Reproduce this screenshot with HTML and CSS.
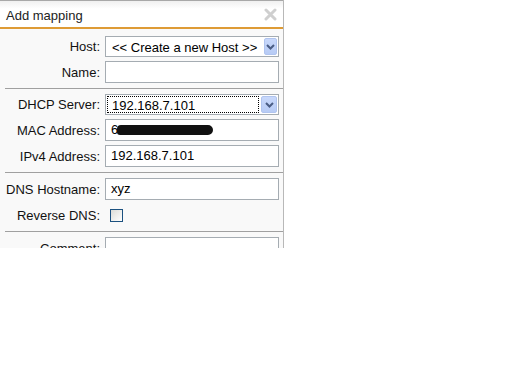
FILE: index.html
```html
<!DOCTYPE html>
<html lang="en">
<head>
    <meta charset="UTF-8">
    <meta name="viewport" content="width=device-width, initial-scale=1.0">
    <title>Add mapping</title>
    <link rel="stylesheet" href="styles.css">
</head>
<body>
    <div class="dialog">
        <div class="title-bar">
            <span class="title">Add mapping</span>
            <svg class="close" width="13" height="13" viewBox="0 0 13 13">
                <path d="M2 2 L11 11 M11 2 L2 11" stroke="#cfcfcf" stroke-width="3" stroke-linecap="round"/>
            </svg>
        </div>

        <div class="section first">
            <label class="lbl">Host:</label>
            <div class="select">
                <span class="select-text">&lt;&lt; Create a new Host &gt;&gt;</span>
                <span class="select-btn"><svg width="9" height="6" viewBox="0 0 9 6"><path d="M1 1 L4.5 4.5 L8 1" fill="none" stroke="#4a5d85" stroke-width="2"/></svg></span>
            </div>
            <label class="lbl">Name:</label>
            <div class="input"></div>
        </div>

        <div class="section">
            <label class="lbl">DHCP Server:</label>
            <div class="select">
                <span class="select-text focused">192.168.7.101</span>
                <span class="select-btn"><svg width="9" height="6" viewBox="0 0 9 6"><path d="M1 1 L4.5 4.5 L8 1" fill="none" stroke="#4a5d85" stroke-width="2"/></svg></span>
            </div>
            <label class="lbl">MAC Address:</label>
            <div class="input">6<span class="redact"></span></div>
            <label class="lbl">IPv4 Address:</label>
            <div class="input">192.168.7.101</div>
        </div>

        <div class="section">
            <label class="lbl">DNS Hostname:</label>
            <div class="input">xyz</div>
            <label class="lbl">Reverse DNS:</label>
            <div class="check-cell"><span class="checkbox"></span></div>
        </div>

        <div class="section last">
            <label class="lbl">Comment:</label>
            <div class="input"></div>
        </div>
    </div>
</body>
</html>
```

FILE: styles.css
```css
* {
    box-sizing: border-box;
}

body {
    margin: 0;
    padding: 0;
    background: #ffffff;
    font-family: "Liberation Sans", Arial, sans-serif;
    font-size: 13px;
    color: #000;
}

.dialog {
    width: 284px;
    height: 248px;
    overflow: hidden;
    background: #f9f9f9;
    border-right: 1px solid #b8b8b8;
}

.title-bar {
    display: flex;
    align-items: center;
    justify-content: space-between;
    height: 29px;
    padding: 0 6px;
    border-top: 1px solid #a8a8a8;
    border-bottom: 2px solid #de9b35;
    background: linear-gradient(to bottom, #f0f0f0, #ffffff 30%, #ffffff);
}

.title {
    font-size: 13px;
    color: #222;
    padding-top: 2px;
}

.close {
    margin-top: 1px;
}

.section {
    display: grid;
    grid-template-columns: 95px 174px;
    column-gap: 5px;
    row-gap: 4px;
    align-items: center;
    padding: 5px 0;
    margin-left: 5px;
    border-bottom: 1px solid #a0a0a0;
}

.section.first {
    padding-top: 7px;
}

.section .lbl {
    text-align: right;
    margin-left: -5px;
    white-space: nowrap;
    color: #111;
}

.section.last {
    border-bottom: none;
}

.input {
    height: 22px;
    line-height: 20px;
    border: 1px solid #a5acb2;
    background: #ffffff;
    padding: 0 5px;
    white-space: nowrap;
    overflow: hidden;
}

.redact {
    display: inline-block;
    width: 96px;
    height: 10px;
    margin-left: -1px;
    vertical-align: -1px;
    background: #111;
    border-radius: 4px 5px 5px 3px;
}

.select {
    display: flex;
    height: 21px;
    border: 1px solid #a5acb2;
    background: #ffffff;
}

.select-text {
    flex: 1;
    line-height: 17px;
    padding: 0 4px;
    margin: 1px;
    white-space: nowrap;
    border: 1px solid transparent;
}

.select-text.focused {
    border: 1px dotted #000;
}

.select-btn {
    display: flex;
    align-items: center;
    justify-content: center;
    width: 16px;
    margin: 1px;
    background: linear-gradient(to bottom, #c8d8fb, #b7cbf5);
    border: 1px solid #b0c4ef;
    border-radius: 2px;
}

.check-cell {
    height: 22px;
    display: flex;
    align-items: center;
    padding-left: 5px;
}

.checkbox {
    width: 13px;
    height: 13px;
    border: 1px solid #1c5180;
    background: linear-gradient(135deg, #dcdcd7, #ffffff);
}
```
